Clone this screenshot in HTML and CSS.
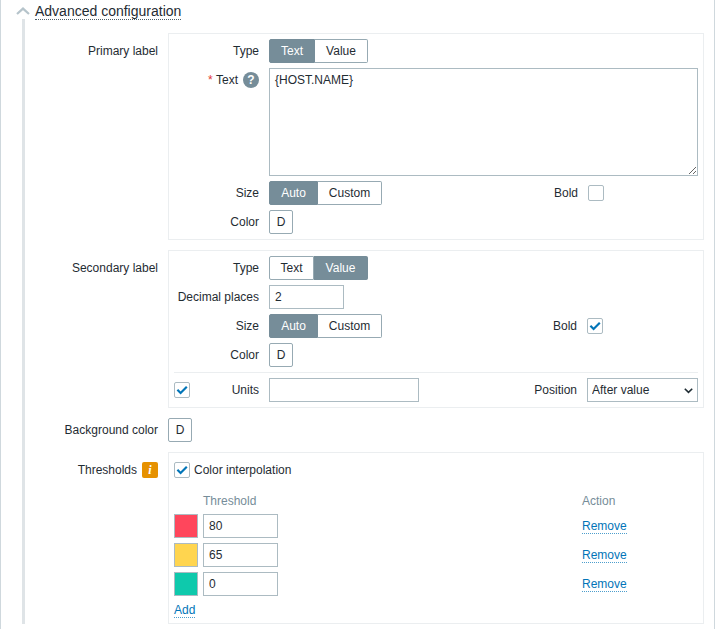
FILE: index.html
```
<!DOCTYPE html>
<html lang="en">
<head>
<meta charset="utf-8">
<title>Advanced configuration</title>
<link rel="stylesheet" href="styles.css">
</head>
<body>
<div class="page">
  <div class="head">
    <svg class="chev" width="14" height="8" viewBox="0 0 14 8"><polyline points="1,7 7,1.6 13,7" fill="none" stroke="#b6c4cb" stroke-width="2.2"/></svg>
    <span class="head-title">Advanced configuration</span>
  </div>
  <div class="fields">
    <div class="field">
      <div class="field-label">Primary label</div>
      <div class="box">
        <div class="row">
          <div class="lbl">Type</div>
          <div class="seg"><span class="seg-btn on w46">Text</span><span class="seg-btn w53">Value</span></div>
        </div>
        <div class="row row-top">
          <div class="lbl"><span class="req">*</span>&nbsp;Text<span class="help">?</span></div>
          <textarea class="area">{HOST.NAME}</textarea>
        </div>
        <div class="row">
          <div class="lbl">Size</div>
          <div class="seg grow"><span class="seg-btn on w49">Auto</span><span class="seg-btn w64">Custom</span></div>
          <div class="lbl lbl-auto">Bold</div>
          <div class="right right-p"><span class="chk"></span></div>
        </div>
        <div class="row">
          <div class="lbl">Color</div>
          <span class="color-btn">D</span>
        </div>
      </div>
    </div>
    <div class="field">
      <div class="field-label">Secondary label</div>
      <div class="box">
        <div class="row">
          <div class="lbl">Type</div>
          <div class="seg"><span class="seg-btn w45">Text</span><span class="seg-btn on w54">Value</span></div>
        </div>
        <div class="row">
          <div class="lbl">Decimal places</div>
          <input class="inp inp-s" type="text" value="2">
        </div>
        <div class="row">
          <div class="lbl">Size</div>
          <div class="seg grow"><span class="seg-btn on w49">Auto</span><span class="seg-btn w64">Custom</span></div>
          <div class="lbl lbl-auto">Bold</div>
          <div class="right right-s"><span class="chk"><svg width="14" height="14" viewBox="0 0 14 14"><polyline points="2.4,6.8 5.6,10 11.8,3.8" fill="none" stroke="#0275b8" stroke-width="2.2"/></svg></span></div>
        </div>
        <div class="row">
          <div class="lbl">Color</div>
          <span class="color-btn">D</span>
        </div>
        <div class="rule"></div>
        <div class="row">
          <div class="lbl lbl-split"><span class="chk"><svg width="14" height="14" viewBox="0 0 14 14"><polyline points="2.4,6.8 5.6,10 11.8,3.8" fill="none" stroke="#0275b8" stroke-width="2.2"/></svg></span><span>Units</span></div>
          <div class="grow"><input class="inp inp-m" type="text"></div>
          <div class="lbl lbl-auto">Position</div>
          <div class="right right-s sel-wrap"><select class="sel"><option>After value</option></select><svg class="sel-arrow" width="9" height="6" viewBox="0 0 9 6"><polyline points="0.8,0.8 4.5,4.4 8.2,0.8" fill="none" stroke="#1f2c33" stroke-width="1.6"/></svg></div>
        </div>
      </div>
    </div>
    <div class="field">
      <div class="field-label field-label-flat">Background color</div>
      <span class="color-btn">D</span>
    </div>
    <div class="field">
      <div class="field-label">Thresholds<span class="info">i</span></div>
      <div class="box">
        <div class="row">
          <span class="chk"><svg width="14" height="14" viewBox="0 0 14 14"><polyline points="2.4,6.8 5.6,10 11.8,3.8" fill="none" stroke="#0275b8" stroke-width="2.2"/></svg></span>
          <span class="chk-text">Color interpolation</span>
        </div>
        <div class="thr">
          <span></span><span class="thr-h">Threshold</span><span></span><span class="thr-h">Action</span>
          <span class="swatch red"></span><input class="inp inp-s" type="text" value="80"><span></span><span class="cell"><a class="link">Remove</a></span>
          <span class="swatch yellow"></span><input class="inp inp-s" type="text" value="65"><span></span><span class="cell"><a class="link">Remove</a></span>
          <span class="swatch green"></span><input class="inp inp-s" type="text" value="0"><span></span><span class="cell"><a class="link">Remove</a></span>
        </div>
        <div class="add"><a class="link">Add</a></div>
      </div>
    </div>
  </div>
</div>
</body>
</html>
```
FILE: styles.css
```
* { box-sizing: border-box; }
html, body { margin: 0; padding: 0; background: #fff; }
body { font-family: "Liberation Sans", Arial, sans-serif; font-size: 12px; color: #1f2c33; overflow: hidden; }
.page { width: 715px; height: 629px; border-left: 1px solid #cfd8dd; border-right: 1px solid #cfd8dd; overflow: hidden; }
.head { display: flex; align-items: flex-start; height: 19px; padding-left: 15px; }
.chev { margin-top: 7px; flex: none; }
.head-title { margin-left: 5px; font-size: 14px; line-height: 16px; padding-top: 3px; height: 20px; border-bottom: 1px dotted #4f5f68; }
.fields { margin-left: 21px; margin-right: 10px; border-left: 3px solid #dfe4e7; padding-top: 14px; height: 605px; display: flex; flex-direction: column; gap: 10px; }
.field { display: flex; gap: 10px; align-items: flex-start; }
.field-label { width: 133px; flex: none; text-align: right; line-height: 24px; padding-top: 6px; display: flex; justify-content: flex-end; align-items: center; gap: 5px; height: 30px; }
.field-label-flat { padding-top: 0; height: 24px; }
.box { flex: 1; border: 1px solid #ebeef0; padding: 5px; display: flex; flex-direction: column; gap: 5px; }
.row { display: flex; align-items: center; gap: 10px; min-height: 24px; }
.row-top { align-items: flex-start; }
.rule { height: 1px; background: #ebeef0; }
.lbl { width: 85px; flex: none; text-align: right; line-height: 24px; display: flex; justify-content: flex-end; align-items: center; }
.lbl-auto { width: auto; }
.lbl-split { justify-content: space-between; }
.grow { flex: 1; }
.right { flex: none; display: flex; align-items: center; }
.right-p { width: 110px; }
.right-s { width: 111px; }
.seg { display: flex; }
.seg-btn { height: 24px; line-height: 22px; padding: 0; text-align: center; border: 1px solid #97aab3; border-left-width: 0; background: #fff; flex: none; }
.seg-btn:first-child { border-left-width: 1px; border-radius: 2px 0 0 2px; }
.seg-btn:last-child { border-radius: 0 2px 2px 0; }
.seg-btn.on { background: #768d99; border-color: #768d99; color: #fff; }
.w45 { width: 45px; }
.w46 { width: 46px; }
.w49 { width: 49px; }
.w53 { width: 53px; }
.w54 { width: 54px; }
.w64 { width: 64px; }
.req { color: #e33734; }
.help { width: 16px; height: 16px; margin-left: 5px; border-radius: 50%; background: #768d99; color: #fff; font-weight: bold; font-size: 12px; line-height: 16px; text-align: center; }
.area { width: 429px; height: 108px; display: block; margin: 0; padding: 4px 5px; border: 1px solid #acbbc2; border-radius: 0; font: 12px/14px "Liberation Sans", Arial, sans-serif; color: #1f2c33; background: #fff; outline: none; }
.inp { height: 24px; display: block; margin: 0; padding: 0 5px; border: 1px solid #acbbc2; border-radius: 0; font: 12px "Liberation Sans", Arial, sans-serif; color: #1f2c33; background: #fff; outline: none; }
.inp-s { width: 75px; }
.inp-m { width: 150px; }
.sel-wrap { position: relative; }
.sel { appearance: none; -webkit-appearance: none; width: 111px; height: 24px; margin: 0; padding: 0 0 0 4px; border: 1px solid #acbbc2; border-radius: 0; font: 12px "Liberation Sans", Arial, sans-serif; color: #1f2c33; background: #fff; outline: none; }
.sel-arrow { position: absolute; right: 5px; top: 10px; }
.color-btn { width: 24px; height: 24px; flex: none; border: 1px solid #97aab3; border-radius: 2px; background: #fff; text-align: center; line-height: 22px; }
.chk { width: 16px; height: 16px; flex: none; display: flex; align-items: center; justify-content: center; border: 1px solid #acbbc2; border-radius: 2px; background: #fff; }
.chk svg { display: block; }
.chk-text { margin-left: -6px; }
.info { width: 16px; height: 16px; border-radius: 2px; background: #e69100; color: #fff; font: italic bold 12px/16px "Liberation Serif", serif; text-align: center; }
.thr { display: grid; grid-template-columns: 24px 75px 1fr 116px; grid-template-rows: 18px repeat(3, 24px); gap: 5px; margin-top: 4px; }
.thr-h { color: #768d99; line-height: 20px; }
.cell { line-height: 24px; }
.swatch { border: 1px solid #acbbc2; display: block; }
.red { background: #ff465c; }
.yellow { background: #ffd54f; }
.green { background: #0ec9ac; }
.link { color: #0275b8; border-bottom: 1px dotted rgba(2, 117, 184, 0.7); cursor: pointer; }
.add { line-height: 18px; height: 17px; }
```
